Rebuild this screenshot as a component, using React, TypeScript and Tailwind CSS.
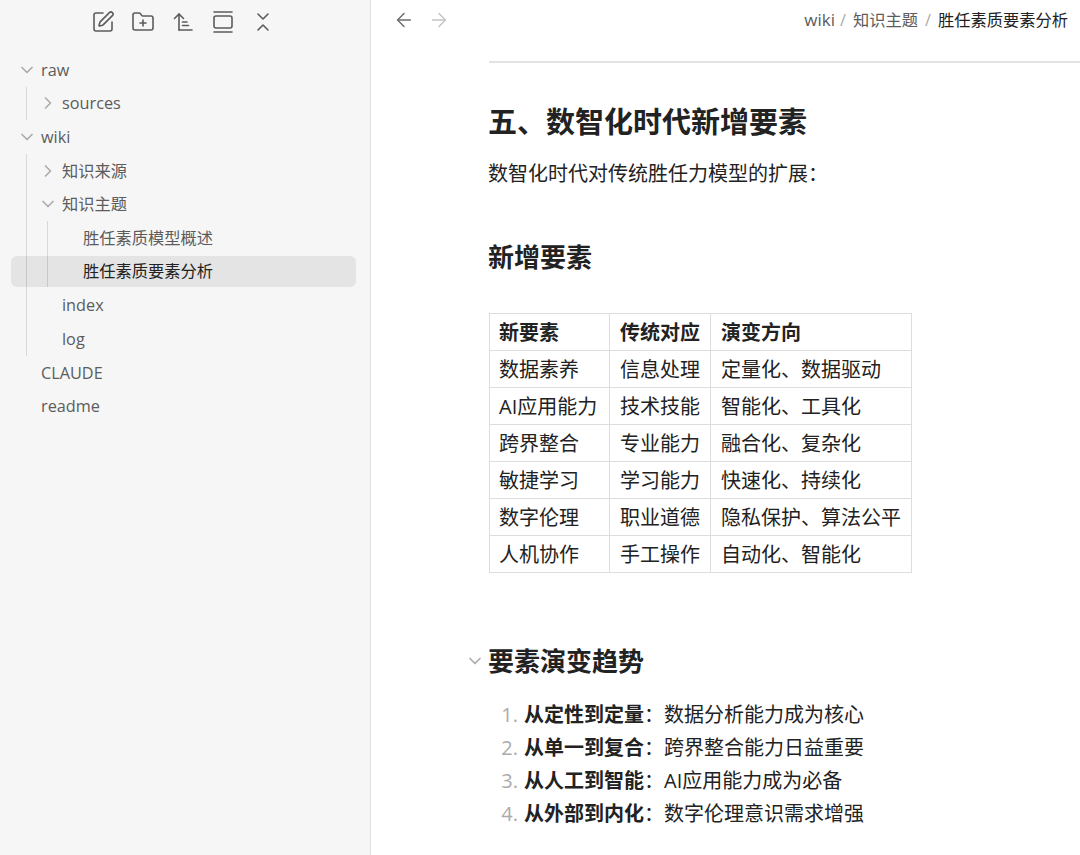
import { ArrowLeft, ArrowRight, ChevronDown, ChevronRight, ChevronsDownUp, FolderPlus, GalleryVertical, SquarePen } from "lucide-react";

const cjk = '"Open Sans", "Noto Sans CJK SC", sans-serif';

function Row({ label, open, closed, pad, selected }: { label: string; open?: boolean; closed?: boolean; pad: string; selected?: boolean }) {
  return (
    <div className={`flex items-center rounded-md ${pad} ${selected ? "mt-[0.83px] mb-[1.84px] h-[31px] bg-black/[.07] text-[#222222]" : "h-[33.67px] text-[#5c5c5c]"}`}>
      {open && <ChevronDown className="mr-[4px] h-[20px] w-[20px] -ml-[24px] text-[#ababab]" strokeWidth={2} />}
      {closed && <ChevronRight className="mr-[4px] h-[20px] w-[20px] -ml-[24px] text-[#ababab]" strokeWidth={2} />}
      <span>{label}</span>
    </div>
  );
}

function SortIcon() {
  return (
    <svg width="24" height="24" viewBox="0 0 24 24" fill="none" stroke="currentColor" strokeWidth="1.6" strokeLinecap="round" strokeLinejoin="round">
      <path d="M3.500 8.500 8 4l4.500 4.500" />
      <path d="M8 4v16" />
      <path d="M11.500 12H16" />
      <path d="M11.500 15.500h6" />
      <path d="M8 20h13" />
    </svg>
  );
}

const rows = [
  ["新要素", "传统对应", "演变方向"],
  ["数据素养", "信息处理", "定量化、数据驱动"],
  ["AI应用能力", "技术技能", "智能化、工具化"],
  ["跨界整合", "专业能力", "融合化、复杂化"],
  ["敏捷学习", "学习能力", "快速化、持续化"],
  ["数字伦理", "职业道德", "隐私保护、算法公平"],
  ["人机协作", "手工操作", "自动化、智能化"],
];

const list = [
  ["从定性到定量", "数据分析能力成为核心"],
  ["从单一到复合", "跨界整合能力日益重要"],
  ["从人工到智能", "AI应用能力成为必备"],
  ["从外部到内化", "数字伦理意识需求增强"],
];

export default function App() {
  return (
    <div className="flex h-[855px] w-[1080px] overflow-hidden bg-white" style={{ fontFamily: cjk }}>
      <aside className="w-[371px] shrink-0 border-r border-[#e0e0e0] bg-[#f6f6f6] text-[16.25px]">
        <div className="flex h-[53px] items-start justify-center gap-[16px] pt-[10px] pr-[4px] text-[#5c5c5c]">
          <SquarePen size={24} strokeWidth={1.6} />
          <FolderPlus size={24} strokeWidth={1.6} />
          <SortIcon />
          <GalleryVertical size={24} strokeWidth={1.6} />
          <ChevronsDownUp size={24} strokeWidth={1.6} />
        </div>
        <div className="ml-[11px] mr-[14px]">
          <Row label="raw" open pad="pl-[30px]" />
          <div className="ml-[15px] border-l border-[#d8d8d8]">
            <Row label="sources" closed pad="pl-[35px]" />
          </div>
          <Row label="wiki" open pad="pl-[30px]" />
          <div className="ml-[15px] border-l border-[#d8d8d8]">
            <Row label="知识来源" closed pad="pl-[35px]" />
            <Row label="知识主题" open pad="pl-[35px]" />
            <div className="ml-[20px] border-l border-[#d8d8d8]">
              <Row label="胜任素质模型概述" pad="pl-[35px]" />
              <div className="-ml-[37px]">
                <Row label="胜任素质要素分析" selected pad="pl-[72px]" />
              </div>
            </div>
            <Row label="index" pad="pl-[35px]" />
            <Row label="log" pad="pl-[35px]" />
          </div>
          <Row label="CLAUDE" pad="pl-[30px]" />
          <Row label="readme" pad="pl-[30px]" />
        </div>
      </aside>
      <main className="min-w-0 flex-1">
        <header className="flex h-[40px] items-center justify-between pl-[22px] pr-[12px]">
          <div className="flex gap-[13px]">
            <ArrowLeft size={22} strokeWidth={1.6} className="text-[#6e6e6e]" />
            <ArrowRight size={22} strokeWidth={1.6} className="text-[#c4c4c4]" />
          </div>
          <div className="flex items-center text-[16.25px] text-[#5c5c5c]">
            <span className="text-[17px]">wiki</span>
            <span className="mr-[7px] ml-[5px] text-[#ababab]">/</span>
            <span>知识主题</span>
            <span className="mx-[7px] text-[#ababab]">/</span>
            <span className="text-[#222222]">胜任素质要素分析</span>
          </div>
        </header>
        <div className="ml-[118px] text-[20px] text-[#222222]">
          <hr className="mt-[21px] border-t-2 border-[#e3e3e3]" />
          <h1 className="mt-[37px] -ml-[1px] text-[29px] leading-[44px] font-bold">五、数智化时代新增要素</h1>
          <p className="mt-[13px] -ml-[1px] leading-[33px]">数智化时代对传统胜任力模型的扩展：</p>
          <h2 className="mt-[47px] -ml-[1px] text-[26px] leading-[40px] font-bold">新增要素</h2>
          <table className="mt-[36px] border-collapse text-[20px]">
            <tbody>
              {rows.map((r, i) => (
                <tr key={i} className="h-[37px]">
                  {r.map((c, j) => (
                    <td
                      key={j}
                      className={`border border-[#dddddd] pt-[2px] pr-[10px] pb-0 leading-[34px] whitespace-nowrap ${i === 0 ? "font-bold" : ""} ${j === 0 ? "w-[120px] pl-[9px]" : j === 1 ? "w-[101px] pl-[10px]" : "w-[201px] pl-[10px]"}`}
                    >
                      {c}
                    </td>
                  ))}
                </tr>
              ))}
            </tbody>
          </table>
          <div className="relative mt-[68px]">
            <ChevronDown size={20} strokeWidth={2} className="absolute -left-[24px] top-[10px] text-[#ababab]" />
            <h2 className="-ml-[1px] text-[26px] leading-[40px] font-bold">要素演变趋势</h2>
          </div>
          <ol className="mt-[17px]">
            {list.map(([b, t], i) => (
              <li key={i} className="flex h-[33px] items-center leading-[33px]">
                <span className="w-[35px] pr-[6px] text-right text-[#ababab]">{i + 1}.</span>
                <span className="font-bold">{b}</span>
                <span>：</span>
                <span>{t}</span>
              </li>
            ))}
          </ol>
        </div>
      </main>
    </div>
  );
}
